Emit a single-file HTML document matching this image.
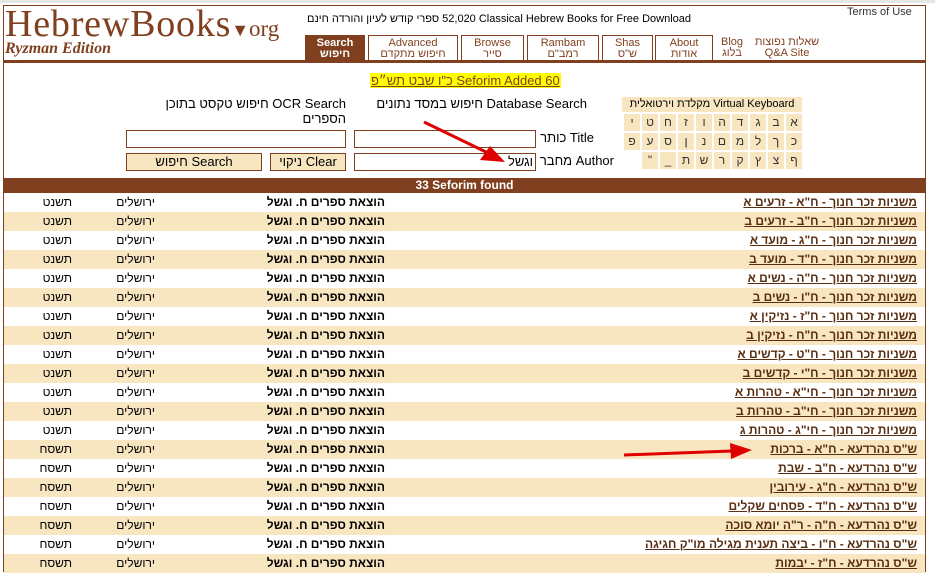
<!DOCTYPE html>
<html><head><meta charset="utf-8"><style>
*{margin:0;padding:0;box-sizing:border-box}
body{width:935px;height:572px;overflow:hidden;background:#fff;font-family:"Liberation Sans","Noto Sans CJK SC",sans-serif;font-size:12px;color:#000;position:relative}
.a{position:absolute}
.r{direction:rtl}
.tab{position:absolute;top:35px;height:26px;border:1px solid #80401f;border-bottom:none;text-align:center;font-size:11px;line-height:11px;color:#80401f;padding-top:2px}
.inp{position:absolute;height:18px;border:1px solid #80401f;background:#fff}
.btn{position:absolute;height:18px;border:1px solid #80401f;background:#f8e6c0;text-align:center;font-size:13px;line-height:16px;direction:rtl}
.k{position:absolute;width:16px;height:17px;background:#f8e6c0;text-align:center;font-size:12px;line-height:17px;color:#333}
.row{position:absolute;left:4px;width:921px;height:19px;font-size:12px;line-height:19px}
.row:nth-child(even){background:#f8e6c0}
.row span{position:absolute;direction:rtl}
.t{right:8px;color:#5a2e12;font-weight:bold;text-decoration:underline}
.p{right:540px;font-weight:bold}
.c{right:770px}
.y{right:853px}
</style></head><body>
<div class="a" style="left:0;top:0;width:935px;height:3px;background:#e6e6e6"></div>
<div class="a" style="left:3px;top:5px;width:923px;height:567px;border:1px solid #80401f;border-bottom:none"></div>
<div class="a" style="left:5px;top:2px;font-family:'Liberation Serif',serif;font-size:38px;letter-spacing:0.8px;color:#80401f;white-space:nowrap">HebrewBooks<span style="font-size:18px;letter-spacing:0">&#9660;</span><span style="font-size:23px;letter-spacing:0">org</span></div>
<div class="a" style="left:5px;top:40px;font-family:'Liberation Serif',serif;font-size:16px;font-style:italic;font-weight:bold;color:#80401f">Ryzman Edition</div>
<div class="a" style="left:307px;top:13px;font-size:11px;white-space:nowrap"><span style="unicode-bidi:isolate;direction:rtl;display:inline-block">ספרי קודש לעיון והורדה חינם</span> <span style="unicode-bidi:isolate;display:inline-block">52,020 Classical Hebrew Books for Free Download</span></div>
<div class="a" style="left:847px;top:6px;font-size:11px;color:#333">Terms of Use</div>
<div class="tab" style="left:305px;width:60px;background:#80401f;color:#fff;font-weight:bold">Search<br>חיפוש</div>
<div class="tab" style="left:368px;width:90px">Advanced<br>חיפוש מתקדם</div>
<div class="tab" style="left:461px;width:63px">Browse<br>סייר</div>
<div class="tab" style="left:527px;width:72px">Rambam<br>רמב"ם</div>
<div class="tab" style="left:602px;width:51px">Shas<br>ש"ס</div>
<div class="tab" style="left:655px;width:58px">About<br>אודות</div>
<div class="tab" style="left:716px;width:32px;border:none">Blog<br>בלוג</div>
<div class="tab" style="left:752px;width:70px;border:none">שאלות נפוצות<br>Q&amp;A Site</div>
<div class="a" style="left:3px;top:60px;width:923px;height:3px;background:#80401f"></div>

<div class="a r" style="left:370px;top:73px;background:#ffff00;color:#80401f;text-decoration:underline;font-size:13px;padding:0 1px">60 Seforim Added כ"ו שבט תש״פ</div>
<div class="a r" style="left:357px;top:96px;width:230px;font-size:13px;white-space:nowrap">Database Search חיפוש במסד נתונים</div>
<div class="a r" style="left:150px;top:96px;width:196px;font-size:13px;line-height:15px">OCR Search חיפוש טקסט בתוכן הספרים</div>
<div class="inp" style="left:126px;top:130px;width:220px"></div>
<div class="inp" style="left:354px;top:130px;width:182px"></div>
<div class="a r" style="left:538px;top:130px;width:56px;font-size:13px">Title כותר</div>
<div class="btn" style="left:126px;top:153px;width:136px">Search חיפוש</div>
<div class="btn" style="left:270px;top:153px;width:76px">Clear ניקוי</div>
<div class="inp" style="left:354px;top:153px;width:182px;text-align:right;font-size:13px;padding-right:2px;line-height:16px">וגשל</div>
<div class="a r" style="left:538px;top:153px;width:76px;font-size:13px">Author מחבר</div>

<div class="a r" style="left:622px;top:97px;width:180px;height:15px;background:#f8e6c0;font-size:11px;text-align:center;line-height:15px">Virtual Keyboard מקלדת וירטואלית</div>

<div class="a" style="left:3px;top:178px;width:923px;height:15px;background:#80401f;color:#fff;font-weight:bold;text-align:center;font-size:12px;line-height:15px">33 Seforim found</div>

<div class="a" style="left:0;top:193px;width:935px;height:380px">
<div class="row" style="top:0"><span class="t">משניות זכר חנוך - ח"א - זרעים א</span><span class="p">הוצאת ספרים ח. וגשל</span><span class="c">ירושלים</span><span class="y">תשנט</span></div>
<div class="row" style="top:19px"><span class="t">משניות זכר חנוך - ח"ב - זרעים ב</span><span class="p">הוצאת ספרים ח. וגשל</span><span class="c">ירושלים</span><span class="y">תשנט</span></div>
<div class="row" style="top:38px"><span class="t">משניות זכר חנוך - ח"ג - מועד א</span><span class="p">הוצאת ספרים ח. וגשל</span><span class="c">ירושלים</span><span class="y">תשנט</span></div>
<div class="row" style="top:57px"><span class="t">משניות זכר חנוך - ח"ד - מועד ב</span><span class="p">הוצאת ספרים ח. וגשל</span><span class="c">ירושלים</span><span class="y">תשנט</span></div>
<div class="row" style="top:76px"><span class="t">משניות זכר חנוך - ח"ה - נשים א</span><span class="p">הוצאת ספרים ח. וגשל</span><span class="c">ירושלים</span><span class="y">תשנט</span></div>
<div class="row" style="top:95px"><span class="t">משניות זכר חנוך - ח"ו - נשים ב</span><span class="p">הוצאת ספרים ח. וגשל</span><span class="c">ירושלים</span><span class="y">תשנט</span></div>
<div class="row" style="top:114px"><span class="t">משניות זכר חנוך - ח"ז - נזיקין א</span><span class="p">הוצאת ספרים ח. וגשל</span><span class="c">ירושלים</span><span class="y">תשנט</span></div>
<div class="row" style="top:133px"><span class="t">משניות זכר חנוך - ח"ח - נזיקין ב</span><span class="p">הוצאת ספרים ח. וגשל</span><span class="c">ירושלים</span><span class="y">תשנט</span></div>
<div class="row" style="top:152px"><span class="t">משניות זכר חנוך - ח"ט - קדשים א</span><span class="p">הוצאת ספרים ח. וגשל</span><span class="c">ירושלים</span><span class="y">תשנט</span></div>
<div class="row" style="top:171px"><span class="t">משניות זכר חנוך - ח"י - קדשים ב</span><span class="p">הוצאת ספרים ח. וגשל</span><span class="c">ירושלים</span><span class="y">תשנט</span></div>
<div class="row" style="top:190px"><span class="t">משניות זכר חנוך - חי"א - טהרות א</span><span class="p">הוצאת ספרים ח. וגשל</span><span class="c">ירושלים</span><span class="y">תשנט</span></div>
<div class="row" style="top:209px"><span class="t">משניות זכר חנוך - חי"ב - טהרות ב</span><span class="p">הוצאת ספרים ח. וגשל</span><span class="c">ירושלים</span><span class="y">תשנט</span></div>
<div class="row" style="top:228px"><span class="t">משניות זכר חנוך - חי"ג - טהרות ג</span><span class="p">הוצאת ספרים ח. וגשל</span><span class="c">ירושלים</span><span class="y">תשנט</span></div>
<div class="row" style="top:247px"><span class="t">ש"ס נהרדעא - ח"א - ברכות</span><span class="p">הוצאת ספרים ח. וגשל</span><span class="c">ירושלים</span><span class="y">תשסח</span></div>
<div class="row" style="top:266px"><span class="t">ש"ס נהרדעא - ח"ב - שבת</span><span class="p">הוצאת ספרים ח. וגשל</span><span class="c">ירושלים</span><span class="y">תשסח</span></div>
<div class="row" style="top:285px"><span class="t">ש"ס נהרדעא - ח"ג - עירובין</span><span class="p">הוצאת ספרים ח. וגשל</span><span class="c">ירושלים</span><span class="y">תשסח</span></div>
<div class="row" style="top:304px"><span class="t">ש"ס נהרדעא - ח"ד - פסחים שקלים</span><span class="p">הוצאת ספרים ח. וגשל</span><span class="c">ירושלים</span><span class="y">תשסח</span></div>
<div class="row" style="top:323px"><span class="t">ש"ס נהרדעא - ח"ה - ר"ה יומא סוכה</span><span class="p">הוצאת ספרים ח. וגשל</span><span class="c">ירושלים</span><span class="y">תשסח</span></div>
<div class="row" style="top:342px"><span class="t">ש"ס נהרדעא - ח"ו - ביצה תענית מגילה מו"ק חגיגה</span><span class="p">הוצאת ספרים ח. וגשל</span><span class="c">ירושלים</span><span class="y">תשסח</span></div>
<div class="row" style="top:361px"><span class="t">ש"ס נהרדעא - ח"ז - יבמות</span><span class="p">הוצאת ספרים ח. וגשל</span><span class="c">ירושלים</span><span class="y">תשסח</span></div>
</div>

<svg class="a" style="left:0;top:0" width="935" height="572">
<g stroke="#e00000" stroke-width="3" fill="#e00000">
<line x1="424" y1="122" x2="488" y2="153"/>
<polygon points="505,162 480,160 490,146" stroke="none"/>
<line x1="624" y1="455" x2="732" y2="451"/>
<polygon points="752,450 730,443 731,459" stroke="none"/>
</g>
</svg>

<div class="k" style="left:786px;top:114px">א</div><div class="k" style="left:768px;top:114px">ב</div><div class="k" style="left:750px;top:114px">ג</div><div class="k" style="left:732px;top:114px">ד</div><div class="k" style="left:714px;top:114px">ה</div><div class="k" style="left:696px;top:114px">ו</div><div class="k" style="left:678px;top:114px">ז</div><div class="k" style="left:660px;top:114px">ח</div><div class="k" style="left:642px;top:114px">ט</div><div class="k" style="left:624px;top:114px">י</div>
<div class="k" style="left:786px;top:133px">כ</div><div class="k" style="left:768px;top:133px">ך</div><div class="k" style="left:750px;top:133px">ל</div><div class="k" style="left:732px;top:133px">מ</div><div class="k" style="left:714px;top:133px">ם</div><div class="k" style="left:696px;top:133px">נ</div><div class="k" style="left:678px;top:133px">ן</div><div class="k" style="left:660px;top:133px">ס</div><div class="k" style="left:642px;top:133px">ע</div><div class="k" style="left:624px;top:133px">פ</div>
<div class="k" style="left:786px;top:152px">ף</div><div class="k" style="left:768px;top:152px">צ</div><div class="k" style="left:750px;top:152px">ץ</div><div class="k" style="left:732px;top:152px">ק</div><div class="k" style="left:714px;top:152px">ר</div><div class="k" style="left:696px;top:152px">ש</div><div class="k" style="left:678px;top:152px">ת</div><div class="k" style="left:660px;top:152px">_</div><div class="k" style="left:642px;top:152px">"</div>
</body></html>
